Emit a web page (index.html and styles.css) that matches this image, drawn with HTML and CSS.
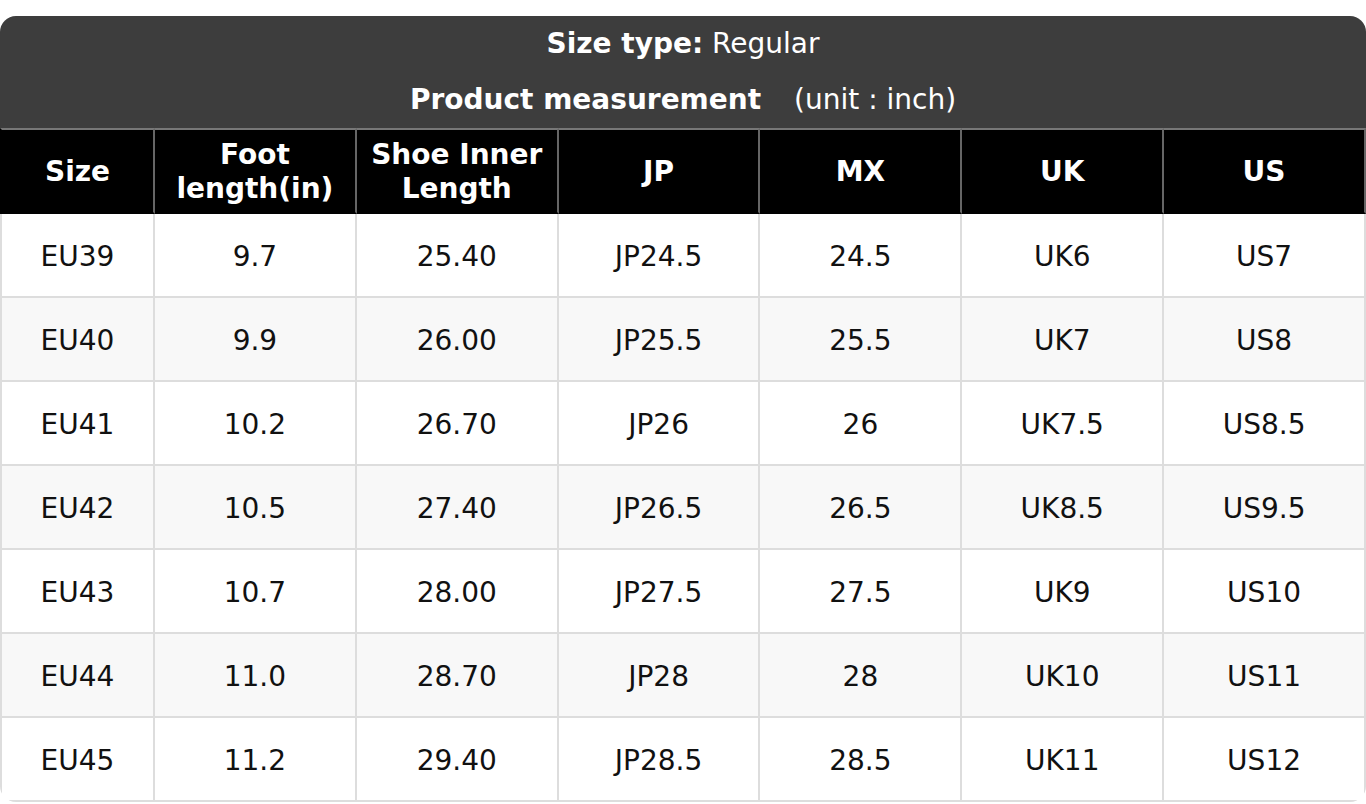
FILE: index.html
```html
<!DOCTYPE html>
<html>
<head>
<meta charset="utf-8">
<link rel="stylesheet" href="styles.css">
</head>
<body>
<div class="chart">
  <div class="title">
    <div class="line"><b>Size type:</b> Regular</div>
    <div class="line"><b>Product measurement</b><span class="unit">(unit : inch)</span></div>
  </div>
  <table>
    <thead>
      <tr>
        <th class="first">Size</th>
        <th>Foot<br>length(in)</th>
        <th>Shoe Inner<br>Length</th>
        <th>JP</th>
        <th>MX</th>
        <th>UK</th>
        <th>US</th>
      </tr>
    </thead>
    <tbody>
      <tr><td>EU39</td><td>9.7</td><td>25.40</td><td>JP24.5</td><td>24.5</td><td>UK6</td><td>US7</td></tr>
      <tr><td>EU40</td><td>9.9</td><td>26.00</td><td>JP25.5</td><td>25.5</td><td>UK7</td><td>US8</td></tr>
      <tr><td>EU41</td><td>10.2</td><td>26.70</td><td>JP26</td><td>26</td><td>UK7.5</td><td>US8.5</td></tr>
      <tr><td>EU42</td><td>10.5</td><td>27.40</td><td>JP26.5</td><td>26.5</td><td>UK8.5</td><td>US9.5</td></tr>
      <tr><td>EU43</td><td>10.7</td><td>28.00</td><td>JP27.5</td><td>27.5</td><td>UK9</td><td>US10</td></tr>
      <tr><td>EU44</td><td>11.0</td><td>28.70</td><td>JP28</td><td>28</td><td>UK10</td><td>US11</td></tr>
      <tr><td>EU45</td><td>11.2</td><td>29.40</td><td>JP28.5</td><td>28.5</td><td>UK11</td><td>US12</td></tr>
    </tbody>
  </table>
</div>
</body>
</html>
```

FILE: styles.css
```css
html, body {
  margin: 0;
  padding: 0;
  background: #fff;
}
body {
  padding-top: 16px;
  font-family: "DejaVu Sans", Verdana, sans-serif;
  font-size: 28px;
  color: #111;
}
.chart {
  width: 1366px;
  border-radius: 16px;
  overflow: hidden;
}
.title {
  background: #3d3d3d;
  color: #fff;
  text-align: center;
  height: 112px;
}
.line {
  height: 56px;
  line-height: 56px;
}
.unit {
  margin-left: 33px;
}
table {
  width: 100%;
  border-collapse: separate;
  border-spacing: 0;
  table-layout: fixed;
}
th, td {
  box-sizing: border-box;
  padding: 0;
  text-align: center;
  vertical-align: middle;
  border-right: 2px solid #ddd;
  border-bottom: 2px solid #ddd;
}
th:first-child, td:first-child {
  border-left: 2px solid #ddd;
}
th {
  background: #000;
  color: #fff;
  font-weight: bold;
  line-height: 34px;
  height: 86px;
  padding-top: 1px;
  border-top: 2px solid #777;
  border-right-color: #666;
  border-bottom-color: #000;
}
th:first-child {
  border-left-color: #000;
}
th.first {
  width: 155px;
}
td {
  height: 84px;
  line-height: 33px;
  padding-top: 2px;
}
tbody tr:nth-child(even) td {
  background: #f8f8f8;
}
```
